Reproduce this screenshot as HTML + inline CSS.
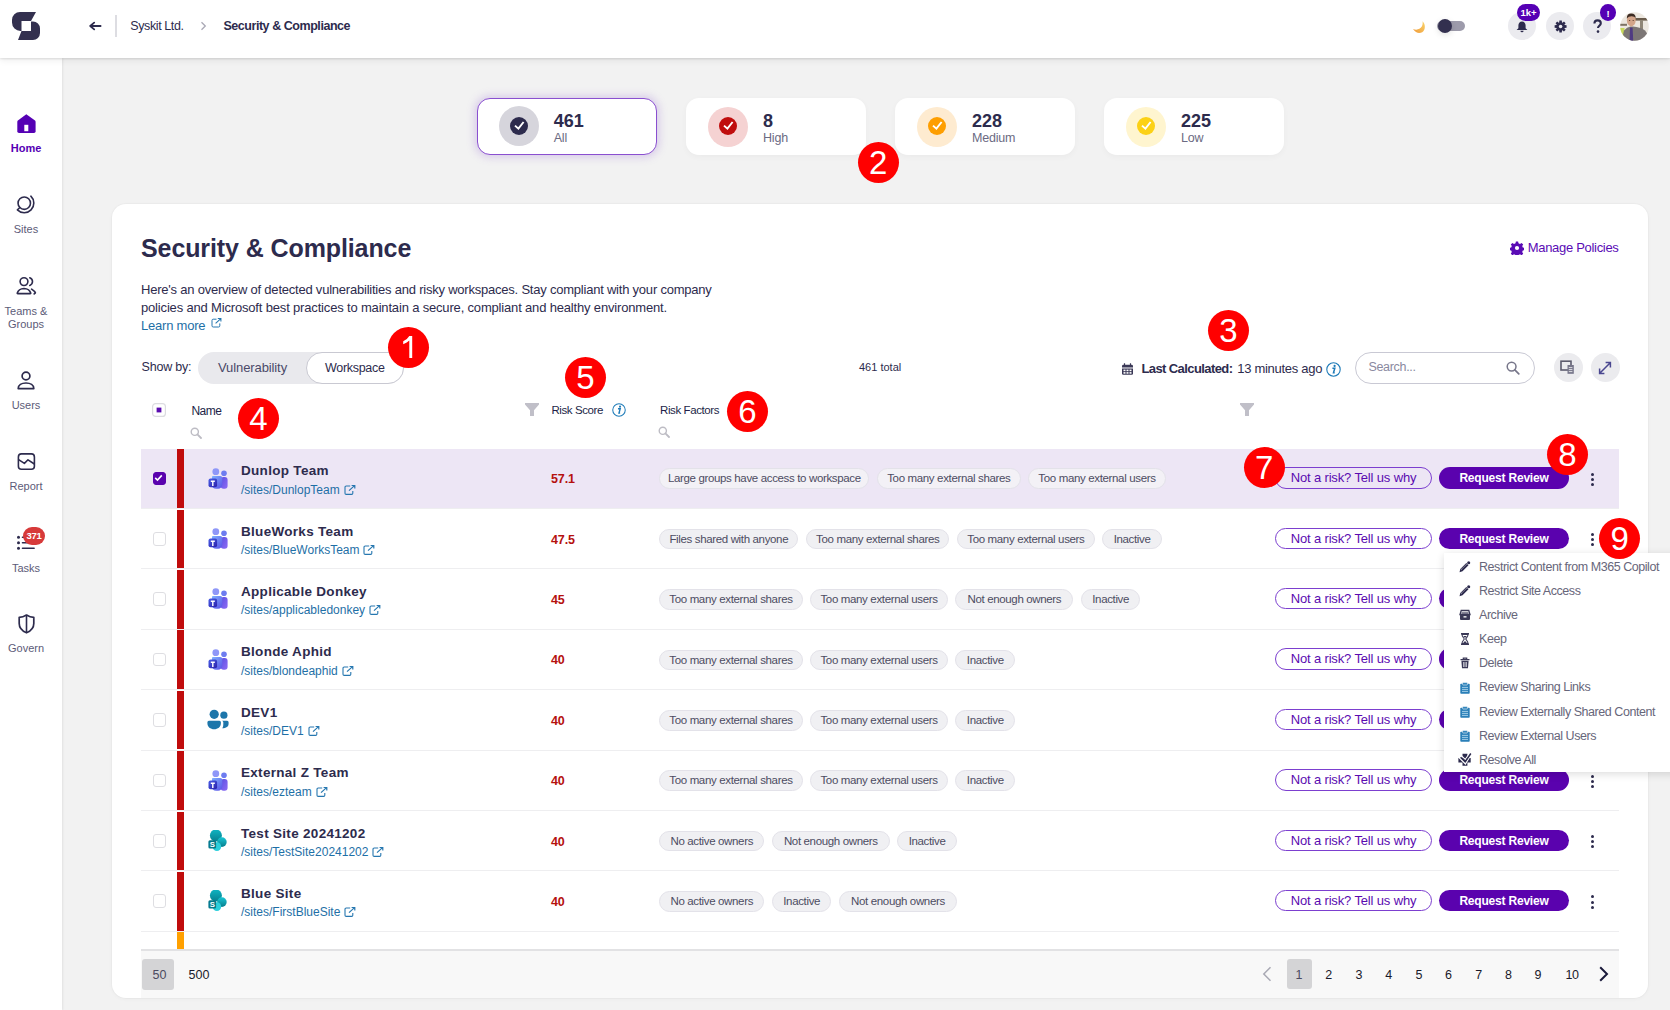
<!DOCTYPE html>
<html><head><meta charset="utf-8">
<style>
*{box-sizing:border-box;margin:0;padding:0}
html,body{width:1670px;height:1010px;overflow:hidden;background:#f2f2f2;font-family:"Liberation Sans",sans-serif;color:#2d2b4d;position:relative}
.a{position:absolute;white-space:nowrap}
#hdr{position:absolute;left:0;top:0;width:1670px;height:58px;background:#fff;box-shadow:0 1px 2px rgba(0,0,0,.1),0 2px 7px rgba(0,0,0,.08);z-index:5}
#side{position:absolute;left:0;top:58px;width:62px;height:952px;background:#fff;box-shadow:1px 0 2px rgba(0,0,0,.07);z-index:4}
.nav{position:absolute;left:0;width:62px;text-align:center;font-size:11px;color:#5c5b78;line-height:14px}
.nav svg{position:absolute}
.hbtn{position:absolute;top:12px;width:28px;height:28px;border-radius:50%;background:#ebebef}
.hbtn svg{position:absolute;left:0;top:0}
.sum{position:absolute;top:98px;width:180px;height:57px;background:#fff;border-radius:13px;box-shadow:0 2px 6px rgba(0,0,0,.035)}
.sum.act{border:1.3px solid #8a4fd0;box-shadow:0 0 8px 2px rgba(140,90,210,.28)}
.sum .ic{position:absolute;left:22px;top:8.6px;width:40px;height:40px;border-radius:50%}
.sum .ic i{position:absolute;left:11px;top:11px;width:18px;height:18px;border-radius:50%}
.sum .ic svg{position:absolute;left:11px;top:10.4px}
.sum .n{position:absolute;left:77px;top:9px;font-size:18px;font-weight:bold;color:#2d2b4d;line-height:22px}
.sum .l{position:absolute;left:77px;top:33.3px;font-size:12.5px;color:#6b6a82;line-height:15px;letter-spacing:-.2px}
.sum.act .n,.sum.act .l,.sum.act .ic{margin-left:-1.3px;margin-top:-1.3px}
#card{position:absolute;left:112px;top:204px;width:1536px;height:794px;background:#fff;border-radius:14px;box-shadow:0 0 0 1px rgba(0,0,0,.018),0 1px 4px rgba(0,0,0,.035)}
.badge{position:absolute;width:41px;height:41px;border-radius:50%;background:#ff0000;color:#fff;font-size:33px;line-height:42px;text-align:center;z-index:10;font-family:"Liberation Sans",sans-serif}
.row{position:absolute;left:141px;width:1478px;height:60.4px;border-bottom:1px solid #eeeef0}
.row.sel{background:#ede6f5}
.cb{position:absolute;left:11.5px;top:23px;width:13.5px;height:13.5px;border:1.3px solid #dedee2;border-radius:3px;background:#fff}
.cb.on{background:#5a02ae;border-color:#5a02ae}
.cb.on svg{position:absolute;left:-1.3px;top:-1.3px}
.bar{position:absolute;left:36px;top:0.6px;width:7px;height:58.6px;background:#c00c0c}
.ric{position:absolute;left:66.5px;top:19px;width:22px;height:22px}
.nm{position:absolute;left:100px;top:14.5px;font-size:13.5px;font-weight:bold;line-height:16px;color:#2d2b4d;letter-spacing:.3px}
.pth{position:absolute;left:100px;top:34px;font-size:12px;line-height:14px;color:#1e6fa6;white-space:nowrap}
.pth svg{margin-left:4px;vertical-align:-1px}
.sc{position:absolute;left:410px;top:23.5px;font-size:12.5px;font-weight:bold;color:#b5100e;line-height:14px;letter-spacing:-.1px}
.chips{position:absolute;left:518.2px;top:19.8px;display:flex;gap:7.6px;white-space:nowrap}
.chip{display:inline-block;flex:none;text-align:center;height:20.7px;line-height:19.2px;padding:0;border:1px solid #e3e2e9;background:#f0f0f3;border-radius:11px;font-size:11.5px;letter-spacing:-.35px;color:#4d4c62}
.row.sel .chip{background:#f3f1f6}
.nar{position:absolute;left:1134px;top:18.5px;width:157px;height:21.5px;border:1.4px solid #7c3fcf;border-radius:11px;font-size:13px;line-height:19px;color:#5a0bb0;text-align:center;letter-spacing:-.15px;background:transparent}
.rr{position:absolute;left:1298px;top:18.5px;width:130px;height:21.5px;border-radius:11px;background:#5a02ae;font-size:12px;font-weight:bold;line-height:23.5px;color:#fff;text-align:center;letter-spacing:-.2px}
.keb{position:absolute;left:1449.5px;top:24px;width:3px;height:14px}
.keb i{display:block;width:3px;height:3px;border-radius:50%;background:#2d2b4d;margin-bottom:2.2px}
.mi{position:absolute;left:35px;font-size:12.5px;line-height:12.5px;color:#67667a;letter-spacing:-.45px;white-space:nowrap}
.mic{position:absolute;left:14.6px;width:14px;height:12px}
.mic svg{display:block}

</style></head><body>
<div id="hdr">
<svg class="a" style="left:0;top:0" width="52" height="52" viewBox="0 0 52 52"><path d="M20 12H36L31 21H21.5V31H20.5A8.5 8.5 0 0 1 12 22.5V20A8 8 0 0 1 20 12Z" fill="#33304f"/><path d="M31 21.5H33A7 7 0 0 1 40 28.5V33A7 7 0 0 1 33 40H18L21.5 31H31Z" fill="#33304f"/></svg>
<svg class="a" style="left:88px;top:20px" width="14" height="12" viewBox="0 0 14 12"><path d="M12.6 6H2.2M6.2 2.6L2.2 6l4 3.4" fill="none" stroke="#2d2b4d" stroke-width="1.8" stroke-linecap="round" stroke-linejoin="round"/></svg>
<div class="a" style="left:115px;top:15px;width:1.5px;height:22px;background:#dddde2"></div>
<div class="a" style="left:130.3px;top:19.5px;font-size:12.5px;line-height:12.5px;letter-spacing:-.4px;color:#2d2b4d">Syskit Ltd.</div>
<svg class="a" style="left:200px;top:21px" width="7" height="10" viewBox="0 0 7 10"><path d="M1.5 1.2L5.3 5 1.5 8.8" fill="none" stroke="#a9a8b5" stroke-width="1.3"/></svg>
<div class="a" style="left:223.4px;top:19.5px;font-size:12.5px;line-height:12.5px;font-weight:bold;letter-spacing:-.45px;color:#2d2b4d">Security &amp; Compliance</div>

<svg class="a" style="left:1412px;top:20px" width="15" height="14" viewBox="0 0 15 14"><defs><linearGradient id="mg" x1="1" y1="0" x2="0" y2="1"><stop offset="0" stop-color="#f9d46a"/><stop offset="1" stop-color="#f09a3a"/></linearGradient></defs><path d="M10.5 1.3C13.6 4 13.8 10 10.2 12.2 7.6 13.7 3.8 13.4 1 9.1 4.6 10.3 8 9.6 9.8 6.6 10.7 5 10.9 3 10.5 1.3Z" fill="url(#mg)"/></svg>
<div class="a" style="left:1437px;top:21.2px;width:27.5px;height:10px;border-radius:5px;background:#9d9bab"></div>
<div class="a" style="left:1437.5px;top:18.8px;width:14.5px;height:14.5px;border-radius:50%;background:#33304f;box-shadow:0 2px 6px rgba(0,0,0,.12)"></div>

<div class="hbtn" style="left:1507.5px"><svg width="28" height="28" viewBox="0 0 28 28"><path d="M14 9.6C11.7 9.6 10.4 11.4 10.4 13.5V16.3L8.6 18H19.4L17.6 16.3V13.5C17.6 11.4 16.3 9.6 14 9.6Z" fill="#2d2b4d"/><path d="M12.4 18.7A1.6 1.6 0 0 0 15.6 18.7Z" fill="#2d2b4d"/></svg></div>
<div class="a" style="left:1517px;top:3.8px;width:23px;height:17.5px;border-radius:9px;background:#5500b4;color:#fff;font-size:9.5px;font-weight:bold;line-height:18.5px;text-align:center;letter-spacing:-.1px;z-index:2">1k+</div>
<div class="hbtn" style="left:1545.5px"><svg width="28" height="28" viewBox="0 0 28 28"><path fill="#2d2b4d" d="M13.21 10.43L13.39 8.52L15.81 8.52L15.99 10.43L16.49 10.64L17.97 9.42L19.68 11.13L18.46 12.61L18.67 13.11L20.58 13.29L20.58 15.71L18.67 15.89L18.46 16.39L19.68 17.87L17.97 19.58L16.49 18.36L15.99 18.57L15.81 20.48L13.39 20.48L13.21 18.57L12.71 18.36L11.23 19.58L9.52 17.87L10.74 16.39L10.53 15.89L8.62 15.71L8.62 13.29L10.53 13.11L10.74 12.61L9.52 11.13L11.23 9.42L12.71 10.64Z"/><circle cx="14.6" cy="14.5" r="1.8" fill="#ebebef"/></svg></div>
<div class="hbtn" style="left:1582.5px"><svg width="29" height="29" viewBox="0 0 29 29"><path d="M11.4 11.6c0-1.9 1.4-3.2 3.2-3.2s3.2 1.2 3.2 2.9c0 2.4-2.8 2.6-2.8 4.8" fill="none" stroke="#2d2b4d" stroke-width="2.1"/><circle cx="15" cy="19.6" r="1.3" fill="#2d2b4d"/></svg></div>
<div class="a" style="left:1599.8px;top:4px;width:16.5px;height:16.8px;border-radius:50%;background:#5500b4;color:#fff;font-size:9.5px;font-weight:bold;line-height:19px;text-align:center;z-index:2">!</div>
<svg class="a" style="left:1620px;top:11.5px" width="29" height="29" viewBox="0 0 29 29"><defs><clipPath id="avc"><circle cx="14.5" cy="14.5" r="14.3"/></clipPath></defs><g clip-path="url(#avc)"><rect width="29" height="29" fill="#ece7df"/><rect x="15" y="6" width="14" height="2.6" fill="#6a5c4c"/><rect x="0" y="11.8" width="7" height="2" fill="#7d7264"/><rect x="20" y="8" width="3" height="14" fill="#8f8676"/><rect x="0" y="16" width="4.5" height="10" fill="#c7d95a"/><path d="M1.5 29L4 18.5Q7 15.2 10.5 14.6H13Q20 15 25 18.5L29 24V29Z" fill="#7c7675"/><path d="M10 15.5H12.6L13.2 29H9.6Z" fill="#4f3a82"/><ellipse cx="11.3" cy="8.2" rx="4.4" ry="6.2" fill="#d3a58a"/><path d="M6.8 6.5Q6.6 1.5 11.2 1.4Q15.9 1.5 15.7 6Q14.5 4.2 11.5 4.3Q8.4 4.3 6.8 6.5Z" fill="#3b2b22"/><ellipse cx="9.6" cy="8.6" rx=".7" ry=".5" fill="#5a3a2a"/><ellipse cx="13.2" cy="8.6" rx=".7" ry=".5" fill="#5a3a2a"/></g></svg>
</div>

<div id="side">
<svg class="a" style="left:16.5px;top:56px" width="19" height="20" viewBox="0 0 19 20"><path d="M9.3 0.3L18 6.6Q18.6 7.1 18.6 7.9V17.3Q18.6 19 17 19H2Q0.3 19 0.3 17.3V7.9Q0.3 7.1 0.9 6.6Z" fill="#5500b4"/><rect x="7.3" y="10.8" width="4" height="6.4" fill="#fff"/></svg>
<div class="nav" style="left:0;width:52px;top:84.7px;font-weight:bold;color:#5500b4;line-height:11px">Home</div>
<svg class="a" style="left:16px;top:137px" width="22" height="22" viewBox="0 0 22 22"><circle cx="8.26" cy="8.15" r="6.2" fill="none" stroke="#2d2b4d" stroke-width="1.6"/><path d="M14.86 1.18A9.6 9.6 0 1 1 1.4 14.87L3.88 12.53" fill="none" stroke="#2d2b4d" stroke-width="1.6" stroke-linecap="round" stroke-linejoin="round"/></svg>
<div class="nav" style="left:0;width:52px;top:166.4px;line-height:11px">Sites</div>
<svg class="a" style="left:15.5px;top:218px" width="21" height="19" viewBox="0 0 21 19"><circle cx="8" cy="5.6" r="3.9" fill="none" stroke="#2d2b4d" stroke-width="1.6"/><path d="M1.2 17.3Q2.6 12.6 8 12.5Q13.4 12.6 14.8 17.3Q14.8 17.6 14.3 17.6H1.7Q1.2 17.6 1.2 17.3Z" fill="none" stroke="#2d2b4d" stroke-width="1.6" stroke-linejoin="round"/><path d="M13.8 1.7A4.1 4.1 0 0 1 13.8 9.4M15.6 13.1Q18.6 15 19.4 16.8L18.2 17.9" fill="none" stroke="#2d2b4d" stroke-width="1.6" stroke-linecap="round" stroke-linejoin="round"/></svg>
<div class="nav" style="left:0;width:52px;top:246.5px;line-height:13.4px">Teams &amp;<br>Groups</div>
<svg class="a" style="left:17px;top:313px" width="18" height="19" viewBox="0 0 18 19"><circle cx="9" cy="5" r="3.9" fill="none" stroke="#2d2b4d" stroke-width="1.7"/><path d="M1.2 17.6c0-3.6 3.4-5.6 7.8-5.6s7.8 2 7.8 5.6z" fill="none" stroke="#2d2b4d" stroke-width="1.7" stroke-linejoin="round"/></svg>
<div class="nav" style="left:0;width:52px;top:342.4px;line-height:11px">Users</div>
<svg class="a" style="left:16.5px;top:394px" width="19" height="19" viewBox="0 0 19 19"><rect x="1.4" y="1.9" width="16" height="15.3" rx="3" fill="none" stroke="#2d2b4d" stroke-width="1.6"/><path d="M1.2 7.4L7.4 11.4L11 7.8L17.4 12" fill="none" stroke="#2d2b4d" stroke-width="1.6" stroke-linejoin="round"/></svg>
<div class="nav" style="left:0;width:52px;top:423.3px;line-height:11px">Report</div>
<svg class="a" style="left:16px;top:476px" width="20" height="16" viewBox="0 0 20 16"><circle cx="2.5" cy="3.3" r="1.5" fill="#2d2b4d"/><circle cx="2.5" cy="8.7" r="1.5" fill="#2d2b4d"/><circle cx="2.5" cy="14.2" r="1.5" fill="#2d2b4d"/><path d="M6.5 3.3h12M6.5 8.7h12M6.5 14.2h11.6" stroke="#2d2b4d" stroke-width="1.6" stroke-linecap="round"/></svg>
<div class="a" style="left:23px;top:469px;width:22px;height:18px;border-radius:9px;background:#d73a3a;color:#fff;font-size:9.5px;font-weight:bold;line-height:17.6px;text-align:center;letter-spacing:-.3px">371</div>
<div class="nav" style="left:0;width:52px;top:504.5px;line-height:11px">Tasks</div>
<svg class="a" style="left:18px;top:556px" width="17" height="20" viewBox="0 0 17 20"><path d="M8.5 1C6 2.6 3.6 3.3 1.2 3.3v6.2c0 4.5 3.2 7.6 7.3 9.3 4.1-1.7 7.3-4.8 7.3-9.3V3.3C13.4 3.3 11 2.6 8.5 1z" fill="none" stroke="#2d2b4d" stroke-width="1.7" stroke-linejoin="round"/><path d="M8.5 1.5v17" stroke="#2d2b4d" stroke-width="1.6"/></svg>
<div class="nav" style="left:0;width:52px;top:585.2px;line-height:11px">Govern</div>
</div>

<div class="sum act" style="left:477px"><div class="ic" style="background:#d6d5dc"><svg width="18" height="18" viewBox="0 0 18 18"><circle cx="9" cy="9" r="9" fill="#2d2b4d"/><path d="M5 8.6L8.4 11.7L13.6 5" fill="none" stroke="#fff" stroke-width="1.9"/></svg></div><div class="n a" style="top:14px;line-height:18px;top:14px">461</div><div class="l a">All</div></div>
<div class="sum" style="left:686px"><div class="ic" style="background:#f5d2d2"><svg width="18" height="18" viewBox="0 0 18 18"><circle cx="9" cy="9" r="9" fill="#c00d0d"/><path d="M5 8.6L8.4 11.7L13.6 5" fill="none" stroke="#fff" stroke-width="1.9"/></svg></div><div class="n a" style="line-height:18px;top:14px">8</div><div class="l a">High</div></div>
<div class="sum" style="left:895px"><div class="ic" style="background:#feebd0"><svg width="18" height="18" viewBox="0 0 18 18"><circle cx="9" cy="9" r="9" fill="#fe9e00"/><path d="M5 8.6L8.4 11.7L13.6 5" fill="none" stroke="#fff" stroke-width="1.9"/></svg></div><div class="n a" style="line-height:18px;top:14px">228</div><div class="l a">Medium</div></div>
<div class="sum" style="left:1104px"><div class="ic" style="background:#fff5cf"><svg width="18" height="18" viewBox="0 0 18 18"><circle cx="9" cy="9" r="9" fill="#fcd116"/><path d="M5 8.6L8.4 11.7L13.6 5" fill="none" stroke="#fff" stroke-width="1.9"/></svg></div><div class="n a" style="line-height:18px;top:14px">225</div><div class="l a">Low</div></div>

<div id="card"></div>

<div class="a" style="left:141px;top:235.8px;font-size:25px;line-height:25px;font-weight:bold;color:#2d2b4d;letter-spacing:-.1px">Security &amp; Compliance</div>
<svg class="a" style="left:1509.5px;top:240.5px" width="14" height="14" viewBox="-7 -7 14 14"><path fill="#5a0bb5" d="M-1.1-6.6h2.2l.4 1.8 1.5.7 1.6-1 1.6 1.6-1 1.6.6 1.5 1.8.4v2.2l-1.8.4-.6 1.5 1 1.6-1.6 1.6-1.6-1-1.5.6-.4 1.8h-2.2l-.4-1.8-1.5-.6-1.6 1-1.6-1.6 1-1.6-.6-1.5-1.8-.4v-2.2l1.8-.4.6-1.5-1-1.6 1.6-1.6 1.6 1 1.5-.7z"/><circle r="2.1" fill="#fff"/></svg>
<div class="a" style="left:1527.7px;top:241px;font-size:13px;line-height:13px;color:#5a0bb5;letter-spacing:-.3px">Manage Policies</div>

<div class="a" style="left:141px;top:281.2px;font-size:13px;line-height:18px;color:#2d2b4d;letter-spacing:-.22px">Here's an overview of detected vulnerabilities and risky workspaces. Stay compliant with your company</div>
<div class="a" style="left:141px;top:299.2px;font-size:13px;line-height:18px;color:#2d2b4d;letter-spacing:-.17px">policies and Microsoft best practices to maintain a secure, compliant and healthy environment.</div>
<div class="a" style="left:141px;top:317.1px;font-size:13px;line-height:18px;color:#1e6fa6;letter-spacing:-.22px">Learn more</div>
<svg class="a" style="left:210.5px;top:317.5px" width="11" height="10" viewBox="0 0 11 10"><path d="M5.5 1.2H2.2A1.2 1.2 0 0 0 1 2.4v5.4A1.2 1.2 0 0 0 2.2 9h5.4A1.2 1.2 0 0 0 8.8 7.8V5.4" fill="none" stroke="#2677b0" stroke-width="1"/><path d="M4.6 5.4L9.8 0.6M6.8 0.5h3.1v3.1" fill="none" stroke="#2677b0" stroke-width="1.1"/></svg>

<div class="a" style="left:141.5px;top:360.8px;font-size:12.5px;line-height:12.5px;letter-spacing:-.2px;color:#2d2b4d">Show by:</div>
<div class="a" style="left:198px;top:352.4px;width:205.6px;height:31.3px;border-radius:16px;background:#e9e9ed"></div>
<div class="a" style="left:306.2px;top:352.4px;width:97.4px;height:31.3px;border-radius:16px;background:#fff;border:1px solid #c9c9d2"></div>
<div class="a" style="left:218px;top:361.4px;font-size:13px;line-height:13px;letter-spacing:-.1px;color:#4b4a69">Vulnerability</div>
<div class="a" style="left:325px;top:361.6px;font-size:12.5px;line-height:12.5px;letter-spacing:-.3px;color:#2d2b4d">Workspace</div>

<div class="a" style="left:859px;top:361.5px;font-size:11px;line-height:11px;color:#2d2b4d">461 total</div>

<svg class="a" style="left:1120.5px;top:362.5px" width="13" height="12" viewBox="0 0 13 12"><path d="M1 3.2A1.4 1.4 0 0 1 2.4 1.8h8.2A1.4 1.4 0 0 1 12 3.2V4.6H1z" fill="#3a3856"/><path d="M1 5.4h11v5.2A1.2 1.2 0 0 1 10.8 11.8H2.2A1.2 1.2 0 0 1 1 10.6z" fill="#3a3856"/><path d="M3.5 0.3v2.6M9.5 0.3v2.6" stroke="#3a3856" stroke-width="1.2"/><g fill="#fff"><rect x="2.5" y="6.6" width="2" height="1.6"/><rect x="5.5" y="6.6" width="2" height="1.6"/><rect x="8.5" y="6.6" width="2" height="1.6"/><rect x="2.5" y="9.1" width="2" height="1.6"/><rect x="5.5" y="9.1" width="2" height="1.6"/><rect x="8.5" y="9.1" width="2" height="1.6"/></g></svg>
<div class="a" style="left:1141.4px;top:361.7px;font-size:13px;line-height:13px;font-weight:bold;letter-spacing:-.59px;color:#2d2b4d">Last Calculated:</div>
<div class="a" style="left:1237.2px;top:361.7px;font-size:13px;line-height:13px;letter-spacing:-.28px;color:#2d2b4d">13 minutes ago</div>
<svg class="a" style="left:1325.5px;top:362px" width="15" height="15" viewBox="0 0 15 15"><circle cx="7.5" cy="7.5" r="6.7" fill="none" stroke="#1e7bb8" stroke-width="1.1"/><circle cx="8.6" cy="3.9" r="1.1" fill="#1e7bb8"/><path d="M6.4 6.2h2.4l-1.3 4.6h1.2" fill="none" stroke="#1e7bb8" stroke-width="1.5"/></svg>

<div class="a" style="left:1355px;top:352px;width:180px;height:32px;border-radius:16px;background:#fff;border:1px solid #c9c9d4"></div>
<div class="a" style="left:1368.4px;top:361.2px;font-size:12.5px;line-height:12.5px;letter-spacing:-.3px;color:#8a89a0">Search...</div>
<svg class="a" style="left:1505.5px;top:360.5px" width="14" height="14" viewBox="0 0 14 14"><circle cx="5.6" cy="5.6" r="4.4" fill="none" stroke="#77768a" stroke-width="1.5"/><path d="M8.8 8.8l4 4" stroke="#77768a" stroke-width="1.7" stroke-linecap="round"/></svg>
<div class="a" style="left:1553.7px;top:353px;width:29px;height:29px;border-radius:50%;background:#ebebee"></div>
<svg class="a" style="left:1560px;top:360px" width="16" height="15" viewBox="0 0 16 15"><rect x="1" y="1.2" width="10" height="8.8" fill="none" stroke="#5d5c6e" stroke-width="1.6"/><rect x="7.5" y="5" width="6.3" height="8.8" fill="#77768a"/><path d="M8.8 7.6h3.6M8.8 9.6h3.6M8.8 11.6h3.6" stroke="#ebebee" stroke-width=".9"/></svg>
<div class="a" style="left:1590.6px;top:353px;width:29px;height:29px;border-radius:50%;background:#ebebee"></div>
<svg class="a" style="left:1597px;top:359.5px" width="16" height="16" viewBox="0 0 16 16"><path d="M3 13L13 3M8.6 2.6H13.4V7.4M2.6 8.6V13.4H7.4" fill="none" stroke="#4a4790" stroke-width="1.5"/></svg>

<svg class="a" style="left:152px;top:403px" width="14" height="14" viewBox="0 0 14 14"><rect x=".6" y=".6" width="12.8" height="12.8" rx="3" fill="#fff" stroke="#dcdce0" stroke-width="1.2"/><rect x="4.6" y="4.6" width="4.8" height="4.8" fill="#5a0bb0"/></svg>
<div class="a" style="left:191.4px;top:404.5px;font-size:12px;line-height:12px;letter-spacing:-.5px;color:#221f48">Name</div>
<svg class="a" style="left:190px;top:426.5px" width="12" height="12" viewBox="0 0 12 12"><circle cx="4.8" cy="4.8" r="3.6" fill="none" stroke="#bdbcc4" stroke-width="1.4"/><path d="M7.4 7.4l3.6 3.6" stroke="#bdbcc4" stroke-width="1.8" stroke-linecap="round"/></svg>
<svg class="a" style="left:525px;top:403px" width="14" height="13" viewBox="0 0 14 13"><path d="M0 0H14V1.6L9 7.2V13H5V7.2L0 1.6Z" fill="#c0bfc8"/></svg>
<div class="a" style="left:551.4px;top:405px;font-size:11.5px;line-height:11.5px;letter-spacing:-.4px;color:#221f48">Risk Score</div>
<svg class="a" style="left:612px;top:403px" width="14" height="14" viewBox="0 0 15 15"><circle cx="7.5" cy="7.5" r="6.7" fill="none" stroke="#1e7bb8" stroke-width="1.1"/><circle cx="8.6" cy="3.9" r="1.1" fill="#1e7bb8"/><path d="M6.4 6.2h2.4l-1.3 4.6h1.2" fill="none" stroke="#1e7bb8" stroke-width="1.5"/></svg>
<div class="a" style="left:660px;top:405px;font-size:11.5px;line-height:11.5px;letter-spacing:-.4px;color:#221f48">Risk Factors</div>
<svg class="a" style="left:658px;top:426.2px" width="12" height="12" viewBox="0 0 12 12"><circle cx="4.8" cy="4.8" r="3.6" fill="none" stroke="#bdbcc4" stroke-width="1.4"/><path d="M7.4 7.4l3.6 3.6" stroke="#bdbcc4" stroke-width="1.8" stroke-linecap="round"/></svg>
<svg class="a" style="left:1240px;top:403px" width="14" height="13" viewBox="0 0 14 13"><path d="M0 0H14V1.6L9 7.2V13H5V7.2L0 1.6Z" fill="#c0bfc8"/></svg>

<div class="row sel" style="top:448.6px">
<div class="cb on"><svg width="13" height="13" viewBox="0 0 13 13"><path d="M3.2 6.8l2.3 2.2 4.3-4.6" fill="none" stroke="#fff" stroke-width="1.6"/></svg></div><div class="bar"></div><div class="ric"><svg width="22" height="22" viewBox="0 0 22 22"><defs>
<linearGradient id="tg1" x1="0" y1="0" x2="1" y2="1"><stop offset="0" stop-color="#7fb3ff"/><stop offset="1" stop-color="#5a4fe6"/></linearGradient>
<linearGradient id="tg2" x1="0" y1="0" x2="1" y2="1"><stop offset="0" stop-color="#5a4fe0"/><stop offset="1" stop-color="#8f6cf5"/></linearGradient>
<linearGradient id="tg3" x1="0" y1="0" x2="1" y2="1"><stop offset="0" stop-color="#4a5fe8"/><stop offset="1" stop-color="#2a1fa8"/></linearGradient>
</defs>
<circle cx="16" cy="5.3" r="2.8" fill="#6d7cf0"/>
<rect x="12.6" y="9" width="7" height="11.7" rx="3" fill="url(#tg2)"/>
<circle cx="7.8" cy="3.7" r="3.4" fill="#8f97f8"/>
<path d="M4.5 8h7.8a2 2 0 0 1 2 2v6.5a4.3 4.3 0 0 1-4.3 4.3H8a4 4 0 0 1-4-4V10a2 2 0 0 1 .5-2z" fill="url(#tg1)"/>
<rect x="0.5" y="10.6" width="8.6" height="8.7" rx="2" fill="url(#tg3)"/>
<path d="M2.8 12.6h4v1.3H5.5v4H4.1v-4H2.8z" fill="#fff"/>
</svg></div>
<div class="nm">Dunlop Team</div><div class="pth">/sites/DunlopTeam<svg class="ext" width="12" height="10" viewBox="0 0 12 10"><path d="M6.2 1H2.2A1.2 1.2 0 0 0 1 2.2v6A1.2 1.2 0 0 0 2.2 9.4h5.4A1.2 1.2 0 0 0 8.8 8.2V6" fill="none" stroke="#2677b0" stroke-width="1.1"/><path d="M5 5.6L10.5 0.6M7.6 0.4h3.2v3.2" fill="none" stroke="#2677b0" stroke-width="1.2"/></svg></div>
<div class="sc">57.1</div>
<div class="chips"><span class="chip" style="width:210.3px">Large groups have access to workspace</span><span class="chip" style="width:143.5px">Too many external shares</span><span class="chip" style="width:137.6px">Too many external users</span></div>
<div class="nar">Not a risk? Tell us why</div><div class="rr">Request Review</div>
<div class="keb"><i></i><i></i><i></i></div>
</div>
<div class="row" style="top:509.0px">
<div class="cb"></div><div class="bar"></div><div class="ric"><svg width="22" height="22" viewBox="0 0 22 22"><defs>
<linearGradient id="tg1" x1="0" y1="0" x2="1" y2="1"><stop offset="0" stop-color="#7fb3ff"/><stop offset="1" stop-color="#5a4fe6"/></linearGradient>
<linearGradient id="tg2" x1="0" y1="0" x2="1" y2="1"><stop offset="0" stop-color="#5a4fe0"/><stop offset="1" stop-color="#8f6cf5"/></linearGradient>
<linearGradient id="tg3" x1="0" y1="0" x2="1" y2="1"><stop offset="0" stop-color="#4a5fe8"/><stop offset="1" stop-color="#2a1fa8"/></linearGradient>
</defs>
<circle cx="16" cy="5.3" r="2.8" fill="#6d7cf0"/>
<rect x="12.6" y="9" width="7" height="11.7" rx="3" fill="url(#tg2)"/>
<circle cx="7.8" cy="3.7" r="3.4" fill="#8f97f8"/>
<path d="M4.5 8h7.8a2 2 0 0 1 2 2v6.5a4.3 4.3 0 0 1-4.3 4.3H8a4 4 0 0 1-4-4V10a2 2 0 0 1 .5-2z" fill="url(#tg1)"/>
<rect x="0.5" y="10.6" width="8.6" height="8.7" rx="2" fill="url(#tg3)"/>
<path d="M2.8 12.6h4v1.3H5.5v4H4.1v-4H2.8z" fill="#fff"/>
</svg></div>
<div class="nm">BlueWorks Team</div><div class="pth">/sites/BlueWorksTeam<svg class="ext" width="12" height="10" viewBox="0 0 12 10"><path d="M6.2 1H2.2A1.2 1.2 0 0 0 1 2.2v6A1.2 1.2 0 0 0 2.2 9.4h5.4A1.2 1.2 0 0 0 8.8 8.2V6" fill="none" stroke="#2677b0" stroke-width="1.1"/><path d="M5 5.6L10.5 0.6M7.6 0.4h3.2v3.2" fill="none" stroke="#2677b0" stroke-width="1.2"/></svg></div>
<div class="sc">47.5</div>
<div class="chips"><span class="chip" style="width:139.2px">Files shared with anyone</span><span class="chip" style="width:143.5px">Too many external shares</span><span class="chip" style="width:137.6px">Too many external users</span><span class="chip" style="width:59.6px">Inactive</span></div>
<div class="nar">Not a risk? Tell us why</div><div class="rr">Request Review</div>
<div class="keb"><i></i><i></i><i></i></div>
</div>
<div class="row" style="top:569.4px">
<div class="cb"></div><div class="bar"></div><div class="ric"><svg width="22" height="22" viewBox="0 0 22 22"><defs>
<linearGradient id="tg1" x1="0" y1="0" x2="1" y2="1"><stop offset="0" stop-color="#7fb3ff"/><stop offset="1" stop-color="#5a4fe6"/></linearGradient>
<linearGradient id="tg2" x1="0" y1="0" x2="1" y2="1"><stop offset="0" stop-color="#5a4fe0"/><stop offset="1" stop-color="#8f6cf5"/></linearGradient>
<linearGradient id="tg3" x1="0" y1="0" x2="1" y2="1"><stop offset="0" stop-color="#4a5fe8"/><stop offset="1" stop-color="#2a1fa8"/></linearGradient>
</defs>
<circle cx="16" cy="5.3" r="2.8" fill="#6d7cf0"/>
<rect x="12.6" y="9" width="7" height="11.7" rx="3" fill="url(#tg2)"/>
<circle cx="7.8" cy="3.7" r="3.4" fill="#8f97f8"/>
<path d="M4.5 8h7.8a2 2 0 0 1 2 2v6.5a4.3 4.3 0 0 1-4.3 4.3H8a4 4 0 0 1-4-4V10a2 2 0 0 1 .5-2z" fill="url(#tg1)"/>
<rect x="0.5" y="10.6" width="8.6" height="8.7" rx="2" fill="url(#tg3)"/>
<path d="M2.8 12.6h4v1.3H5.5v4H4.1v-4H2.8z" fill="#fff"/>
</svg></div>
<div class="nm">Applicable Donkey</div><div class="pth">/sites/applicabledonkey<svg class="ext" width="12" height="10" viewBox="0 0 12 10"><path d="M6.2 1H2.2A1.2 1.2 0 0 0 1 2.2v6A1.2 1.2 0 0 0 2.2 9.4h5.4A1.2 1.2 0 0 0 8.8 8.2V6" fill="none" stroke="#2677b0" stroke-width="1.1"/><path d="M5 5.6L10.5 0.6M7.6 0.4h3.2v3.2" fill="none" stroke="#2677b0" stroke-width="1.2"/></svg></div>
<div class="sc">45</div>
<div class="chips"><span class="chip" style="width:143.5px">Too many external shares</span><span class="chip" style="width:137.6px">Too many external users</span><span class="chip" style="width:117.8px">Not enough owners</span><span class="chip" style="width:59.6px">Inactive</span></div>
<div class="nar">Not a risk? Tell us why</div><div class="rr">Request Review</div>
<div class="keb"><i></i><i></i><i></i></div>
</div>
<div class="row" style="top:629.8px">
<div class="cb"></div><div class="bar"></div><div class="ric"><svg width="22" height="22" viewBox="0 0 22 22"><defs>
<linearGradient id="tg1" x1="0" y1="0" x2="1" y2="1"><stop offset="0" stop-color="#7fb3ff"/><stop offset="1" stop-color="#5a4fe6"/></linearGradient>
<linearGradient id="tg2" x1="0" y1="0" x2="1" y2="1"><stop offset="0" stop-color="#5a4fe0"/><stop offset="1" stop-color="#8f6cf5"/></linearGradient>
<linearGradient id="tg3" x1="0" y1="0" x2="1" y2="1"><stop offset="0" stop-color="#4a5fe8"/><stop offset="1" stop-color="#2a1fa8"/></linearGradient>
</defs>
<circle cx="16" cy="5.3" r="2.8" fill="#6d7cf0"/>
<rect x="12.6" y="9" width="7" height="11.7" rx="3" fill="url(#tg2)"/>
<circle cx="7.8" cy="3.7" r="3.4" fill="#8f97f8"/>
<path d="M4.5 8h7.8a2 2 0 0 1 2 2v6.5a4.3 4.3 0 0 1-4.3 4.3H8a4 4 0 0 1-4-4V10a2 2 0 0 1 .5-2z" fill="url(#tg1)"/>
<rect x="0.5" y="10.6" width="8.6" height="8.7" rx="2" fill="url(#tg3)"/>
<path d="M2.8 12.6h4v1.3H5.5v4H4.1v-4H2.8z" fill="#fff"/>
</svg></div>
<div class="nm">Blonde Aphid</div><div class="pth">/sites/blondeaphid<svg class="ext" width="12" height="10" viewBox="0 0 12 10"><path d="M6.2 1H2.2A1.2 1.2 0 0 0 1 2.2v6A1.2 1.2 0 0 0 2.2 9.4h5.4A1.2 1.2 0 0 0 8.8 8.2V6" fill="none" stroke="#2677b0" stroke-width="1.1"/><path d="M5 5.6L10.5 0.6M7.6 0.4h3.2v3.2" fill="none" stroke="#2677b0" stroke-width="1.2"/></svg></div>
<div class="sc">40</div>
<div class="chips"><span class="chip" style="width:143.5px">Too many external shares</span><span class="chip" style="width:137.6px">Too many external users</span><span class="chip" style="width:59.6px">Inactive</span></div>
<div class="nar">Not a risk? Tell us why</div><div class="rr">Request Review</div>
<div class="keb"><i></i><i></i><i></i></div>
</div>
<div class="row" style="top:690.2px">
<div class="cb"></div><div class="bar"></div><div class="ric"><svg width="22" height="22" viewBox="0 0 22 22" style="overflow:visible">
<circle cx="6.2" cy="5.3" r="4.6" fill="#1d76aa"/>
<circle cx="15.9" cy="6.2" r="3.6" fill="#1d76aa"/>
<path d="M-0.6 13.3A1.5 1.5 0 0 1 0.9 11.8H11.4A1.5 1.5 0 0 1 12.9 13.3V14.3C12.9 18 9.8 20.3 6.15 20.3C2.5 20.3-0.6 18-0.6 14.3Z" fill="#1d76aa"/>
<path d="M14 11.8H19.1A1.5 1.5 0 0 1 20.6 13.3V14.8C20.6 17.6 18.2 19.3 14.2 19.3C15 18.2 15.3 16.8 15.3 15V13.6C15.3 12.9 14.8 12.2 14 11.8Z" fill="#1d76aa"/>
</svg></div>
<div class="nm">DEV1</div><div class="pth">/sites/DEV1<svg class="ext" width="12" height="10" viewBox="0 0 12 10"><path d="M6.2 1H2.2A1.2 1.2 0 0 0 1 2.2v6A1.2 1.2 0 0 0 2.2 9.4h5.4A1.2 1.2 0 0 0 8.8 8.2V6" fill="none" stroke="#2677b0" stroke-width="1.1"/><path d="M5 5.6L10.5 0.6M7.6 0.4h3.2v3.2" fill="none" stroke="#2677b0" stroke-width="1.2"/></svg></div>
<div class="sc">40</div>
<div class="chips"><span class="chip" style="width:143.5px">Too many external shares</span><span class="chip" style="width:137.6px">Too many external users</span><span class="chip" style="width:59.6px">Inactive</span></div>
<div class="nar">Not a risk? Tell us why</div><div class="rr">Request Review</div>
<div class="keb"><i></i><i></i><i></i></div>
</div>
<div class="row" style="top:750.6px">
<div class="cb"></div><div class="bar"></div><div class="ric"><svg width="22" height="22" viewBox="0 0 22 22"><defs>
<linearGradient id="tg1" x1="0" y1="0" x2="1" y2="1"><stop offset="0" stop-color="#7fb3ff"/><stop offset="1" stop-color="#5a4fe6"/></linearGradient>
<linearGradient id="tg2" x1="0" y1="0" x2="1" y2="1"><stop offset="0" stop-color="#5a4fe0"/><stop offset="1" stop-color="#8f6cf5"/></linearGradient>
<linearGradient id="tg3" x1="0" y1="0" x2="1" y2="1"><stop offset="0" stop-color="#4a5fe8"/><stop offset="1" stop-color="#2a1fa8"/></linearGradient>
</defs>
<circle cx="16" cy="5.3" r="2.8" fill="#6d7cf0"/>
<rect x="12.6" y="9" width="7" height="11.7" rx="3" fill="url(#tg2)"/>
<circle cx="7.8" cy="3.7" r="3.4" fill="#8f97f8"/>
<path d="M4.5 8h7.8a2 2 0 0 1 2 2v6.5a4.3 4.3 0 0 1-4.3 4.3H8a4 4 0 0 1-4-4V10a2 2 0 0 1 .5-2z" fill="url(#tg1)"/>
<rect x="0.5" y="10.6" width="8.6" height="8.7" rx="2" fill="url(#tg3)"/>
<path d="M2.8 12.6h4v1.3H5.5v4H4.1v-4H2.8z" fill="#fff"/>
</svg></div>
<div class="nm">External Z Team</div><div class="pth">/sites/ezteam<svg class="ext" width="12" height="10" viewBox="0 0 12 10"><path d="M6.2 1H2.2A1.2 1.2 0 0 0 1 2.2v6A1.2 1.2 0 0 0 2.2 9.4h5.4A1.2 1.2 0 0 0 8.8 8.2V6" fill="none" stroke="#2677b0" stroke-width="1.1"/><path d="M5 5.6L10.5 0.6M7.6 0.4h3.2v3.2" fill="none" stroke="#2677b0" stroke-width="1.2"/></svg></div>
<div class="sc">40</div>
<div class="chips"><span class="chip" style="width:143.5px">Too many external shares</span><span class="chip" style="width:137.6px">Too many external users</span><span class="chip" style="width:59.6px">Inactive</span></div>
<div class="nar">Not a risk? Tell us why</div><div class="rr">Request Review</div>
<div class="keb"><i></i><i></i><i></i></div>
</div>
<div class="row" style="top:811.0px">
<div class="cb"></div><div class="bar"></div><div class="ric"><svg width="22" height="22" viewBox="0 0 22 22"><defs>
<linearGradient id="sg1" x1="0" y1="0" x2="0" y2="1"><stop offset="0" stop-color="#0fb4c2"/><stop offset="1" stop-color="#07808f"/></linearGradient>
<linearGradient id="sg2" x1="0" y1="0" x2="0" y2="1"><stop offset="0" stop-color="#18c6d4"/><stop offset="1" stop-color="#087e8e"/></linearGradient>
</defs>
<circle cx="7.9" cy="5.5" r="6" fill="url(#sg1)"/>
<circle cx="13.9" cy="12.1" r="4.8" fill="url(#sg2)"/>
<circle cx="8.9" cy="16.6" r="4.3" fill="#2ccfdc"/>
<rect x="0.4" y="10.2" width="7.7" height="8.2" rx="1.5" fill="#05798a"/>
<text x="4.25" y="17" font-family="Liberation Sans" font-size="7.8" font-weight="bold" fill="#fff" text-anchor="middle">S</text>
</svg></div>
<div class="nm">Test Site 20241202</div><div class="pth">/sites/TestSite20241202<svg class="ext" width="12" height="10" viewBox="0 0 12 10"><path d="M6.2 1H2.2A1.2 1.2 0 0 0 1 2.2v6A1.2 1.2 0 0 0 2.2 9.4h5.4A1.2 1.2 0 0 0 8.8 8.2V6" fill="none" stroke="#2677b0" stroke-width="1.1"/><path d="M5 5.6L10.5 0.6M7.6 0.4h3.2v3.2" fill="none" stroke="#2677b0" stroke-width="1.2"/></svg></div>
<div class="sc">40</div>
<div class="chips"><span class="chip" style="width:105.1px">No active owners</span><span class="chip" style="width:117.8px">Not enough owners</span><span class="chip" style="width:59.6px">Inactive</span></div>
<div class="nar">Not a risk? Tell us why</div><div class="rr">Request Review</div>
<div class="keb"><i></i><i></i><i></i></div>
</div>
<div class="row" style="top:871.4px">
<div class="cb"></div><div class="bar"></div><div class="ric"><svg width="22" height="22" viewBox="0 0 22 22"><defs>
<linearGradient id="sg1" x1="0" y1="0" x2="0" y2="1"><stop offset="0" stop-color="#0fb4c2"/><stop offset="1" stop-color="#07808f"/></linearGradient>
<linearGradient id="sg2" x1="0" y1="0" x2="0" y2="1"><stop offset="0" stop-color="#18c6d4"/><stop offset="1" stop-color="#087e8e"/></linearGradient>
</defs>
<circle cx="7.9" cy="5.5" r="6" fill="url(#sg1)"/>
<circle cx="13.9" cy="12.1" r="4.8" fill="url(#sg2)"/>
<circle cx="8.9" cy="16.6" r="4.3" fill="#2ccfdc"/>
<rect x="0.4" y="10.2" width="7.7" height="8.2" rx="1.5" fill="#05798a"/>
<text x="4.25" y="17" font-family="Liberation Sans" font-size="7.8" font-weight="bold" fill="#fff" text-anchor="middle">S</text>
</svg></div>
<div class="nm">Blue Site</div><div class="pth">/sites/FirstBlueSite<svg class="ext" width="12" height="10" viewBox="0 0 12 10"><path d="M6.2 1H2.2A1.2 1.2 0 0 0 1 2.2v6A1.2 1.2 0 0 0 2.2 9.4h5.4A1.2 1.2 0 0 0 8.8 8.2V6" fill="none" stroke="#2677b0" stroke-width="1.1"/><path d="M5 5.6L10.5 0.6M7.6 0.4h3.2v3.2" fill="none" stroke="#2677b0" stroke-width="1.2"/></svg></div>
<div class="sc">40</div>
<div class="chips"><span class="chip" style="width:105.1px">No active owners</span><span class="chip" style="width:59.6px">Inactive</span><span class="chip" style="width:117.8px">Not enough owners</span></div>
<div class="nar">Not a risk? Tell us why</div><div class="rr">Request Review</div>
<div class="keb"><i></i><i></i><i></i></div>
</div>

<div class="a" style="left:177px;top:932.2px;width:7px;height:17px;background:#ffa000"></div>
<div class="a" style="left:141px;top:949px;width:1478px;height:48.6px;background:#f8f8f8;border-top:2px solid #e2e2e4"></div>
<div class="a" style="left:142.3px;top:959px;width:31.4px;height:30.7px;border-radius:3px;background:#d4d4d6"></div>
<div class="a" style="left:152.6px;top:969.3px;font-size:12.5px;line-height:12.5px;color:#4b4a60">50</div>
<div class="a" style="left:188.6px;top:969.3px;font-size:12.5px;line-height:12.5px;color:#1a1a2a">500</div>
<svg class="a" style="left:1261px;top:966px" width="12" height="16" viewBox="0 0 12 16"><path d="M9.5 1.2L2.8 8l6.7 6.8" fill="none" stroke="#a9a9b4" stroke-width="1.5"/></svg>
<div class="a" style="left:1287.1px;top:959.1px;width:24.5px;height:30.4px;border-radius:3px;background:#d4d4d6"></div>
<div class="a" style="left:1284px;top:969.2px;width:30px;text-align:center;font-size:12.5px;line-height:12.5px;color:#4b4a60">1</div>
<div class="a" style="left:1313.8px;top:969.2px;width:30px;text-align:center;font-size:12.5px;line-height:12.5px;color:#1a1a2a">2</div>
<div class="a" style="left:1344px;top:969.2px;width:30px;text-align:center;font-size:12.5px;line-height:12.5px;color:#1a1a2a">3</div>
<div class="a" style="left:1373.8px;top:969.2px;width:30px;text-align:center;font-size:12.5px;line-height:12.5px;color:#1a1a2a">4</div>
<div class="a" style="left:1404px;top:969.2px;width:30px;text-align:center;font-size:12.5px;line-height:12.5px;color:#1a1a2a">5</div>
<div class="a" style="left:1433.5px;top:969.2px;width:30px;text-align:center;font-size:12.5px;line-height:12.5px;color:#1a1a2a">6</div>
<div class="a" style="left:1463.7px;top:969.2px;width:30px;text-align:center;font-size:12.5px;line-height:12.5px;color:#1a1a2a">7</div>
<div class="a" style="left:1493.5px;top:969.2px;width:30px;text-align:center;font-size:12.5px;line-height:12.5px;color:#1a1a2a">8</div>
<div class="a" style="left:1523.1px;top:969.2px;width:30px;text-align:center;font-size:12.5px;line-height:12.5px;color:#1a1a2a">9</div>
<div class="a" style="left:1557.1px;top:969.2px;width:30px;text-align:center;font-size:12.5px;line-height:12.5px;color:#1a1a2a;letter-spacing:-.3px">10</div>
<svg class="a" style="left:1598px;top:965.5px" width="12" height="16" viewBox="0 0 12 16"><path d="M2.2 1.2L9 8l-6.8 6.8" fill="none" stroke="#1a1a3a" stroke-width="2"/></svg>

<div id="menu" class="a" style="left:1444px;top:553.4px;width:240px;height:218.2px;background:#fff;box-shadow:0 2px 8px rgba(0,0,0,.14);z-index:8">
<div class="mi" style="top:7.2px">Restrict Content from M365 Copilot</div><div class="mic" style="top:7.4px"><svg width="14" height="13" viewBox="0 0 14 13" style="overflow:visible"><path d="M0.5 11.3L1.3 8.1L7.3 2.1L9.5 4.3L3.5 10.3Z" fill="#2d2b4d"/><path d="M2.2 8.6L7.6 3.2" stroke="#fff" stroke-width=".7" stroke-dasharray="1 .6"/><circle cx="9.7" cy="1.8" r="1.55" fill="#2d2b4d"/></svg></div>
<div class="mi" style="top:31.4px">Restrict Site Access</div><div class="mic" style="top:31.6px"><svg width="14" height="13" viewBox="0 0 14 13" style="overflow:visible"><path d="M0.5 11.3L1.3 8.1L7.3 2.1L9.5 4.3L3.5 10.3Z" fill="#2d2b4d"/><path d="M2.2 8.6L7.6 3.2" stroke="#fff" stroke-width=".7" stroke-dasharray="1 .6"/><circle cx="9.7" cy="1.8" r="1.55" fill="#2d2b4d"/></svg></div>
<div class="mi" style="top:55.5px">Archive</div><div class="mic" style="top:55.7px"><svg width="12" height="12" viewBox="0 0 12 12"><path d="M2.2 1.5h7.6l1.2 4H1z" fill="none" stroke="#3a3856" stroke-width="1.3"/><rect x="1" y="5.3" width="10" height="5.7" rx="1" fill="#3a3856"/><rect x="4.5" y="7.2" width="3" height="1.3" fill="#fff"/><rect x="2.5" y="3.4" width="7" height="1.2" fill="#3a3856"/></svg></div>
<div class="mi" style="top:79.7px">Keep</div><div class="mic" style="top:79.9px"><svg width="12" height="12" viewBox="0 0 12 12"><path d="M2 0.8h8M2 11.2h8" stroke="#3a3856" stroke-width="1.6"/><path d="M3 1.5h6c0 2.5-2.2 3.6-2.2 4.5S9 8 9 10.5H3C3 8 5.2 7 5.2 6S3 4 3 1.5z" fill="none" stroke="#3a3856" stroke-width="1.1"/><path d="M3.6 10.5L6 8l2.4 2.5zM4.2 3h3.6L6 5z" fill="#3a3856"/></svg></div>
<div class="mi" style="top:103.9px">Delete</div><div class="mic" style="top:104.1px"><svg width="12" height="12" viewBox="0 0 12 12"><path d="M1.5 2.6h9M4.3 2.4V1.2h3.4v1.2" fill="none" stroke="#3a3856" stroke-width="1.2"/><path d="M2.4 3.8h7.2l-.6 7.4H3z" fill="#3a3856"/><path d="M4.6 5v5M6 5v5M7.4 5v5" stroke="#fff" stroke-width=".7"/></svg></div>
<div class="mi" style="top:128.1px">Review Sharing Links</div><div class="mic" style="top:128.2px"><svg width="12" height="12" viewBox="0 0 12 12"><rect x="1.3" y="1.8" width="9.4" height="10" rx=".8" fill="#2a7fb8"/><rect x="3.6" y="0.6" width="4.8" height="2.4" rx=".6" fill="#2a7fb8" stroke="#fff" stroke-width=".6"/><path d="M3 5.4h6M3 7.4h6M3 9.4h6" stroke="#bfe0f2" stroke-width=".8"/></svg></div>
<div class="mi" style="top:152.2px">Review Externally Shared Content</div><div class="mic" style="top:152.4px"><svg width="12" height="12" viewBox="0 0 12 12"><rect x="1.3" y="1.8" width="9.4" height="10" rx=".8" fill="#2a7fb8"/><rect x="3.6" y="0.6" width="4.8" height="2.4" rx=".6" fill="#2a7fb8" stroke="#fff" stroke-width=".6"/><path d="M3 5.4h6M3 7.4h6M3 9.4h6" stroke="#bfe0f2" stroke-width=".8"/></svg></div>
<div class="mi" style="top:176.4px">Review External Users</div><div class="mic" style="top:176.6px"><svg width="12" height="12" viewBox="0 0 12 12"><rect x="1.3" y="1.8" width="9.4" height="10" rx=".8" fill="#2a7fb8"/><rect x="3.6" y="0.6" width="4.8" height="2.4" rx=".6" fill="#2a7fb8" stroke="#fff" stroke-width=".6"/><path d="M3 5.4h6M3 7.4h6M3 9.4h6" stroke="#bfe0f2" stroke-width=".8"/></svg></div>
<div class="mi" style="top:200.6px">Resolve All</div><div class="mic" style="top:200.8px"><svg width="14" height="13" viewBox="0 0 14 13" style="overflow:visible"><path d="M-0.6 3.9H3.5V-0.3H8.4V3.9H11.7V8.6H8.4V11.7H3.5V8.6H-0.6Z" fill="#2d2b4d"/><path d="M-0.2 3.2L6.4 9.9L12.6 -0.6" fill="none" stroke="#fff" stroke-width="1.4"/><path d="M2.3 1.6L6.3 5.4L10.4 -0.4" fill="none" stroke="#fff" stroke-width="1.1"/><path d="M1.6 3.3L6.3 7.7L11.8 -0.5" fill="none" stroke="#2d2b4d" stroke-width="1.5"/></svg></div>

</div>

<div class="badge" style="left:388px;top:327px"><svg width="41" height="41" viewBox="0 0 41 41" style="position:absolute;left:0;top:0"><path d="M21.3 9H24.2V31H21.3V13.6Q19.2 15.6 15.2 17.2V14.2Q19.6 12.2 21.3 9Z" fill="#fff"/></svg></div>
<div class="badge" style="left:857.8px;top:141.9px">2</div>
<div class="badge" style="left:1208px;top:310.1px">3</div>
<div class="badge" style="left:238px;top:398px">4</div>
<div class="badge" style="left:565px;top:357px">5</div>
<div class="badge" style="left:727px;top:391px">6</div>
<div class="badge" style="left:1243.8px;top:447px">7</div>
<div class="badge" style="left:1547px;top:433.8px">8</div>
<div class="badge" style="left:1599.2px;top:517.6px">9</div>

</body></html>
